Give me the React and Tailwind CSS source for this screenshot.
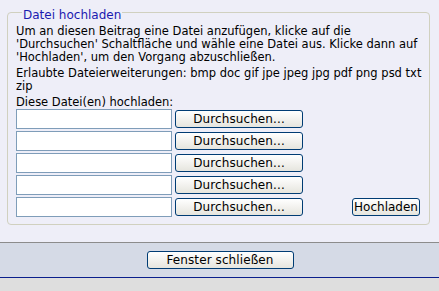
import { useState } from "react";

const font = { fontFamily: '"DejaVu Sans", Verdana, sans-serif' };

function XpButton({ children, className = "" }) {
    return (
        <button
            type="button"
            className={
                "h-[18px] border border-[#003c74] rounded-[3px] bg-gradient-to-b from-white to-[#e6e5de] text-[12px] tracking-[0.1px] leading-none text-black " +
                className
            }
        >
            {children}
        </button>
    );
}

export default function App() {
    const [files] = useState(["", "", "", "", ""]);

    return (
        <div className="w-[439px] h-[291px] flex flex-col bg-[#dedede] text-[11.5px] text-black" style={font}>
            <div className="h-[242px] bg-[#eeeef8] pl-[7px] pr-[9px] pt-[3px]">
                <fieldset className="border border-[#d0d0bf] rounded-[4px] px-[8px] pb-[8px] h-[222px]">
                    <legend className="relative top-[3px] ml-[6px] px-[1px] text-[#1b1bb0] text-[12px]">Datei hochladen</legend>
                    <p className="leading-[13px] mt-[4px] whitespace-nowrap">
                        Um an diesen Beitrag eine Datei anzufügen, klicke auf die
                        <br />
                        'Durchsuchen' Schaltfläche und wähle eine Datei aus. Klicke dann auf
                        <br />
                        'Hochladen', um den Vorgang abzuschließen.
                    </p>
                    <p className="leading-[13px] mt-[3px] whitespace-nowrap">
                        Erlaubte Dateierweiterungen: bmp doc gif jpe jpeg jpg pdf png psd txt
                        <br />
                        zip
                    </p>
                    <p className="leading-[13px] mt-[3px]">Diese Datei(en) hochladen:</p>
                    <div className="flex items-end">
                        <div className="flex flex-col gap-[2px]">
                            {files.map((f, i) => (
                                <div key={i} className="flex items-center gap-[3px]">
                                    <input
                                        type="text"
                                        defaultValue={f}
                                        className="w-[156px] h-[20px] border border-[#7f9db9] bg-white"
                                    />
                                    <XpButton className="w-[128px]">Durchsuchen...</XpButton>
                                </div>
                            ))}
                        </div>
                        <XpButton className="ml-[49px] mb-[1px] w-[68px] tracking-normal">Hochladen</XpButton>
                    </div>
                </fieldset>
            </div>
            <div className="h-[36px] border-t border-[#8c8c8c] border-b border-b-[#0a1e8c] bg-[#d5dae6] flex justify-center items-center">
                <XpButton className="w-[147px] ml-[1px]">Fenster schließen</XpButton>
            </div>
        </div>
    );
}
